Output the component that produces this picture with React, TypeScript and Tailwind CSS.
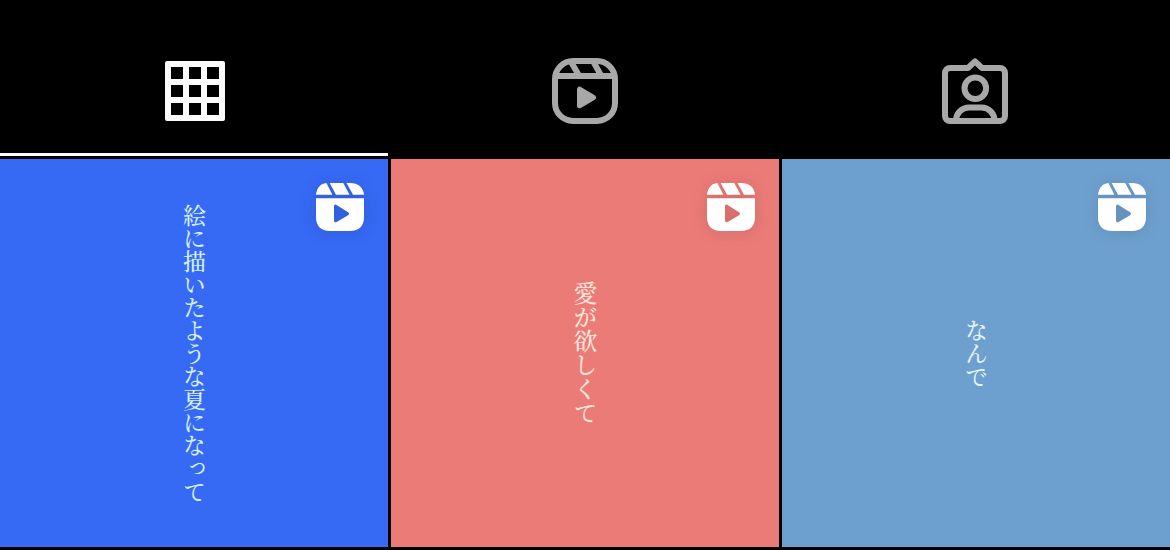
import { useState } from 'react'
import type { ReactNode } from 'react'

const GridIcon = () => (
  <svg className="size-[66px]" viewBox="0 0 66 66" fill="currentColor" aria-hidden="true">
    <path fillRule="evenodd" d="M5 3h56a2 2 0 0 1 2 2v56a2 2 0 0 1-2 2H5a2 2 0 0 1-2-2V5a2 2 0 0 1 2-2zM9 9v12h12V9zM27 9v12h12V9zM45 9v12h12V9zM9 27v12h12V27zM27 27v12h12V27zM45 27v12h12V27zM9 45v12h12V45zM27 45v12h12V45zM45 45v12h12V45z" />
  </svg>
)

const ReelsIcon = () => (
  <svg className="size-[66px]" viewBox="0 0 66 66" fill="none" stroke="currentColor" strokeWidth="6" aria-hidden="true">
    <rect x="3" y="3" width="60" height="60" rx="18" />
    <path d="M3 18h60M18.6 3l8.6 15M41 3l8.3 15" />
    <path d="M27.5 31.2v16.6L41.5 39.5z" fill="currentColor" strokeWidth="5" strokeLinejoin="round" />
  </svg>
)

const TaggedIcon = () => (
  <svg className="size-[66px]" viewBox="0 0 66 66" fill="none" stroke="currentColor" strokeWidth="6" strokeLinejoin="round" aria-hidden="true">
    <path d="M26 10H8a5 5 0 0 0-5 5v43a5 5 0 0 0 5 5h50a5 5 0 0 0 5-5V15a5 5 0 0 0-5-5H40l-7-6.6z" />
    <circle cx="33.3" cy="30.3" r="10.8" />
    <path d="M14 63c0-7.6 5.6-13.4 13-13.4h12.5c7.4 0 13 5.8 13 13.4" />
  </svg>
)

const ReelBadge = () => (
  <svg className="absolute top-6 right-6 size-12 drop-shadow-[0_1px_8px_rgba(0,0,0,0.12)]" viewBox="0 0 48 48" fill="#fff" aria-hidden="true">
    <path d="M0 11.8C.7 4.6 4.8.6 10.4 0L16.4 11.8z" />
    <path d="M13.7 0H27.2l6.4 11.8H20z" />
    <path d="M30.500 0H34c8 0 13.200 4 14 11.800H37z" />
    <path fillRule="evenodd" d="M0 15.300h48V34c0 9-5 14-14 14H14C5 48 0 43 0 34zM18 23.400v14.200c0 1.500 1.300 2.200 2.600 1.500l11.500-6.900c1.200-.7 1.200-2.300 0-3l-11.500-7.300c-1.300-.8-2.600 0-2.600 1.500z" />
  </svg>
)

const tabs: Array<{ id: string; label: string; icon: ReactNode }> = [
  { id: 'posts', label: 'Posts', icon: <GridIcon /> },
  { id: 'reels', label: 'Reels', icon: <ReelsIcon /> },
  { id: 'tagged', label: 'Tagged', icon: <TaggedIcon /> },
]

const posts = [
  { text: '絵に描いたような夏になって', tile: 'bg-[#3669f4]', type: 'text-[23px] text-[#d5f0fb]' },
  { text: '愛が欲しくて', tile: 'bg-[#eb7b77]', type: 'text-[24px] text-[#fde6dc]' },
  { text: 'なんで', tile: 'bg-[#6ea0cf]', type: 'text-[23px] text-[#e4f6fa]' },
]

export default function App() {
  const [active, setActive] = useState('posts')
  return (
    <main className="min-h-screen bg-black">
      <div role="tablist" className="mb-[3px] grid grid-cols-3">
        {tabs.map(t => (
          <button
            key={t.id}
            role="tab"
            aria-label={t.label}
            aria-selected={active === t.id}
            onClick={() => setActive(t.id)}
            className={`flex flex-col items-center pt-[58px] ${active === t.id ? 'text-[#fcfcfc]' : 'text-[#a8a8a8]'}`}
          >
            {t.icon}
            <span className="mt-[29px] block h-[3px] w-full pr-0.5">
              {active === t.id && <span className="block h-full bg-white" />}
            </span>
          </button>
        ))}
      </div>
      <div className="grid grid-cols-3 gap-[3px]">
        {posts.map(p => (
          <a key={p.text} href="#" className={`relative flex aspect-square items-center justify-center ${p.tile}`}>
            <span lang="ja" className={`font-['Noto_Serif_CJK_JP','Noto_Sans_CJK_JP',serif] leading-6 font-medium [writing-mode:vertical-rl] ${p.type}`}>
              {p.text}
            </span>
            <ReelBadge />
          </a>
        ))}
      </div>
    </main>
  )
}
